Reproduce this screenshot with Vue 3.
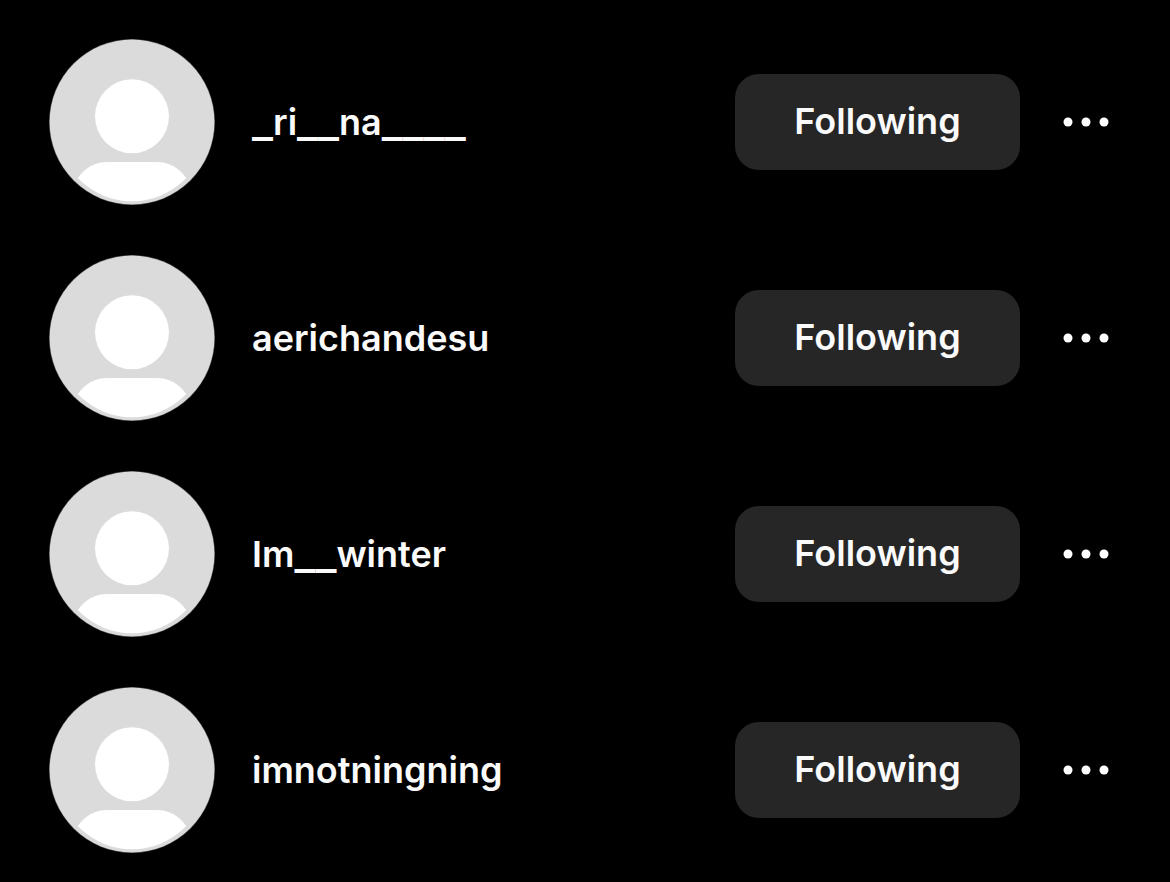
<template>
  <ul class="followers">
    <li v-for="user in users" :key="user" class="follower">
      <a class="profile" href="#" @click.prevent>
        <svg class="avatar" viewBox="0 0 166 166" aria-hidden="true">
          <circle cx="83" cy="83" r="83" fill="#4a4a4a" />
          <circle cx="83" cy="83" r="82.4" fill="#dbdbdb" />
          <circle cx="83" cy="77.3" r="37" fill="#fff" />
          <path d="M28.7 139C36 129 46 123 58 123H108C120 123 130 129 137.3 139A75 75 0 0 1 28.7 139Z" fill="#fff" />
        </svg>
        <span class="username"><span v-for="(part, i) in splitName(user)" :key="i" :class="{ underscores: part.startsWith('_') }">{{ part }}</span></span>
      </a>
      <button class="following" type="button">Following</button>
      <button class="more" type="button" aria-label="More options">
        <svg class="dots" viewBox="0 0 48 10" aria-hidden="true">
          <circle cx="6" cy="5" r="4.5" />
          <circle cx="24" cy="5" r="4.5" />
          <circle cx="42" cy="5" r="4.5" />
        </svg>
      </button>
    </li>
  </ul>
</template>

<script setup>
const users = ['_ri__na____', 'aerichandesu', 'Im__winter', 'imnotningning']

// underscores get their own wider font, so they join into one line
const splitName = (name) => name.match(/_+|[^_]+/g)
</script>

<style>
body {
  margin: 0;
  background: #000;
}
</style>

<style scoped>
.followers {
  display: flex;
  flex-direction: column;
  gap: 50px;
  margin: 0;
  padding: 39px 48px 29px 49px;
  list-style: none;
  font-family: Inter, "Liberation Sans", sans-serif;
}

.follower {
  display: flex;
  align-items: center;
}

.profile {
  display: flex;
  flex: 1;
  align-items: center;
  gap: 37px;
  min-width: 0;
  color: #fafafa;
  text-decoration: none;
}

.avatar {
  flex: none;
  width: 166px;
  height: 166px;
}

.username {
  font-size: 36px;
  font-weight: 600;
  line-height: 44px;
}

.underscores {
  font-family: "DejaVu Sans", sans-serif;
  font-size: 42px;
  line-height: 1px;
  vertical-align: 4px;
}

.following {
  width: 285px;
  height: 96px;
  padding: 0 0 2px;
  border: none;
  border-radius: 24px;
  background: #262626;
  color: #fafafa;
  font-family: inherit;
  font-size: 36px;
  font-weight: 600;
  line-height: 44px;
  cursor: pointer;
}

.more {
  display: flex;
  align-items: center;
  justify-content: center;
  width: 72px;
  height: 72px;
  margin-left: 30px;
  padding: 0;
  border: none;
  background: none;
  cursor: pointer;
}

.dots {
  width: 48px;
  height: 10px;
  fill: #fff;
}
</style>
